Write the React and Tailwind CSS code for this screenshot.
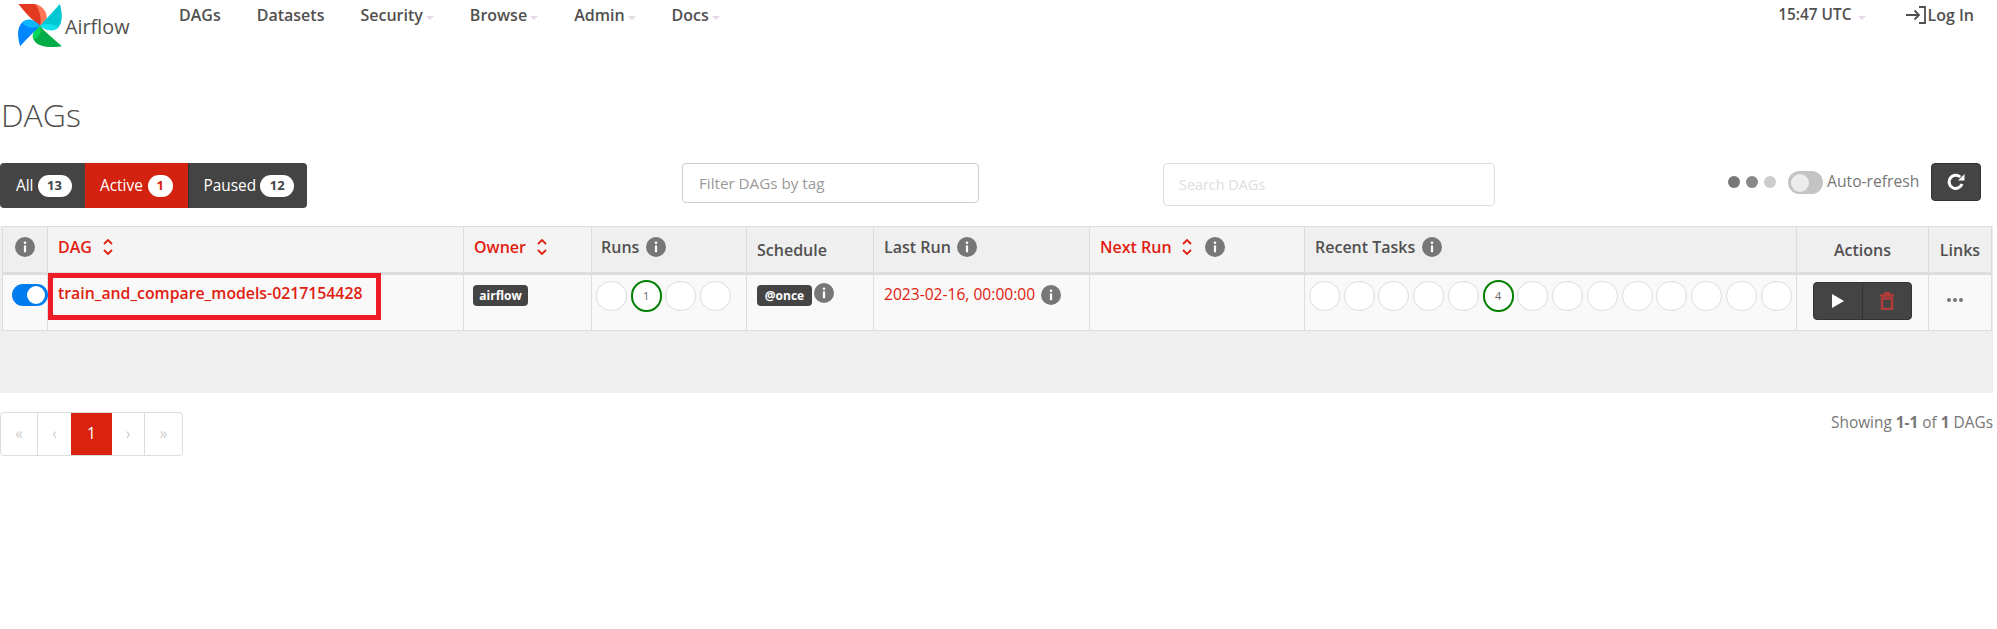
import React from 'react';

const InfoIcon = ({ className = '' }) => (
    <svg viewBox="0 0 20 20" className={`w-5 h-5 shrink-0 ${className}`}>
        <circle cx="10" cy="10" r="10" fill="#777777" />
        <circle cx="10" cy="5.8" r="1.3" fill="#ffffff" />
        <rect x="8.9" y="8.4" width="2.2" height="6.8" fill="#ffffff" />
    </svg>
);

const SortIcon = ({ className = '' }) => (
    <svg viewBox="0 0 10 16" className={`w-[10px] h-4 shrink-0 ${className}`} fill="none" stroke="#e0200f" strokeWidth="1.8">
        <path d="M1 5 L5 1 L9 5" />
        <path d="M1 11 L5 15 L9 11" />
    </svg>
);

const Caret = () => (
    <span className="inline-block ml-[3px] mb-[1px] w-0 h-0 border-x-[4px] border-x-transparent border-t-[4px] border-t-[#e6d8e6]" />
);

const Logo = () => (
    <svg viewBox="24 12 132 130" className="w-[44px] h-[43px] shrink-0">
        <path d="M25 12 C60 9 80 10 94 22 C106 36 112 58 90 78 C74 66 48 44 25 12Z" fill="#e43921" />
        <path d="M76 12 C94 16 114 36 110 58 C107 66 98 72 90 78 C96 60 90 34 76 12Z" fill="#ff7557" />
        <path d="M150 12 C158 40 160 70 142 86 C126 96 106 92 90 78 C106 60 128 36 150 12Z" fill="#00c7d4" />
        <path d="M90 78 C108 68 130 72 146 82 C132 96 106 94 90 78Z" fill="#11e1ee" />
        <path d="M156 140 C124 144 92 144 76 128 C64 112 70 92 90 78 C106 98 132 118 156 140Z" fill="#00ad46" />
        <path d="M90 78 C70 90 64 106 70 120 C88 114 96 96 90 78Z" fill="#04d659" />
        <path d="M30 140 C22 112 20 86 34 70 C50 54 72 60 90 78 C72 96 50 118 30 140Z" fill="#0086ff" />
        <path d="M90 78 C76 86 50 88 36 68 C52 50 76 60 90 78Z" fill="#0cb6ff" />
    </svg>
);

const Circle = ({ value }) =>
    value ? (
        <div className="w-[31px] h-8 rounded-full border-2 border-[#008000] bg-white flex items-center justify-center text-[11px] text-[#666666] shrink-0">
            {value}
        </div>
    ) : (
        <div className="w-[31px] h-[30px] rounded-full border border-[#dddddd] bg-white shrink-0" />
    );

const Tag = ({ children }) => (
    <span className="flex items-center justify-center w-[55px] h-[21px] rounded bg-[#444444] text-white text-[12px] font-bold shrink-0">
        {children}
    </span>
);

const navItems = [
    { label: 'DAGs' },
    { label: 'Datasets' },
    { label: 'Security', caret: true },
    { label: 'Browse', caret: true },
    { label: 'Admin', caret: true },
    { label: 'Docs', caret: true },
];

const thBase = 'border border-[#dddddd] border-b-[3px] p-0 font-semibold align-top';

export default function App() {
    const runs = [null, 1, null, null];
    const tasks = [null, null, null, null, null, 4, null, null, null, null, null, null, null, null];

    return (
        <div className="w-full min-h-[629px] bg-white text-[#51504f] font-['Open_Sans',sans-serif]">
            {/* Top nav */}
            <nav className="flex items-start justify-between h-[93px]">
                <div className="flex items-start">
                    <div className="flex items-center ml-[18px] mt-1 w-[111px]">
                        <Logo />
                        <span className="ml-[3px] mt-[2px] text-[19.8px] text-[#51504f]">Airflow</span>
                    </div>
                    <div className="flex gap-9 ml-[50px] text-[16px] font-semibold leading-[30px]">
                        {navItems.map((item) => (
                            <span key={item.label}>
                                {item.label}
                                {item.caret && <Caret />}
                            </span>
                        ))}
                    </div>
                </div>
                <div className="flex items-start mr-[23px] text-[16px] font-semibold leading-[30px]">
                    <span className="text-[15.4px]">15:47 UTC</span>
                    <span className="ml-[4px]"><Caret /></span>
                    <svg viewBox="0 0 20 18" className="w-5 h-[18px] ml-10 mt-[6px]" fill="none" stroke="#51504f" strokeWidth="1.8">
                        <path d="M0 9 H13 M8.5 4.5 L13 9 L8.5 13.5" />
                        <path d="M13 1 H19 V17 H13" />
                    </svg>
                    <span className="ml-[1px]">Log In</span>
                </div>
            </nav>

            <h2 className="text-[32px] font-light leading-[44px] h-[70px] ml-[1px] text-[#51504f]">DAGs</h2>

            {/* Filters */}
            <div className="flex items-start h-[63px]">
                <div className="flex h-[45px] w-[307px] rounded overflow-hidden bg-[#444444] text-white text-[15.4px]">
                    <div className="w-[85px] flex items-center pl-4">
                        All
                        <span className="ml-[4px] w-[34px] h-[22px] rounded-[11px] bg-white text-[#444444] text-[13px] font-bold flex items-center justify-center">13</span>
                    </div>
                    <div className="w-[102.5px] flex items-center pl-[15px] bg-[#d3220f]">
                        Active
                        <span className="ml-[5px] w-[25px] h-[22px] rounded-[11px] bg-white text-[#d3220f] text-[13px] font-bold flex items-center justify-center">1</span>
                    </div>
                    <div className="flex-1 flex items-center pl-[15px] border-l border-[#333333]">
                        Paused
                        <span className="ml-[4px] w-[34px] h-[22px] rounded-[11px] bg-white text-[#444444] text-[13px] font-bold flex items-center justify-center">12</span>
                    </div>
                </div>
                <div className="ml-[375px] w-[297px] h-10 rounded border border-[#cccccc] flex items-center pl-4 text-[15.2px] text-[#999999]">
                    Filter DAGs by tag
                </div>
                <div className="ml-[184px] w-[332px] h-[43px] rounded border border-[#dddddd] flex items-center pl-[15px] text-[14.4px] text-[#dddddd]">
                    Search DAGs
                </div>
                <div className="ml-[233px] flex items-start">
                    <div className="flex gap-[6px] mt-[13px]">
                        <span className="w-3 h-3 rounded-full bg-[#777777]" />
                        <span className="w-3 h-3 rounded-full bg-[#888888]" />
                        <span className="w-3 h-3 rounded-full bg-[#cccccc]" />
                    </div>
                    <div className="ml-3 mt-2 w-[35px] h-[23px] rounded-full bg-[#c4c4c4] flex items-center pl-[3px]">
                        <span className="w-[18px] h-[18px] rounded-full bg-[#ececec]" />
                    </div>
                    <span className="ml-[4px] mt-[6px] text-[15.7px] leading-6 text-[#777777]">Auto-refresh</span>
                    <div className="ml-3 w-[50px] h-[38px] rounded bg-[#444444] border border-[#333333] flex items-center justify-center">
                        <svg viewBox="0 0 18 18" className="w-[18px] h-[18px]" fill="none">
                            <path d="M15 11 A6.6 6.6 0 1 1 13.2 4" stroke="#ffffff" strokeWidth="3" />
                            <path d="M17.5 1 V7.5 H11Z" fill="#ffffff" />
                        </svg>
                    </div>
                </div>
            </div>

            {/* Table panel */}
            <div className="w-[1993px] bg-[#efefef] h-[167px] pl-[2px]">
                <table className="table-fixed border-collapse w-[1989px] text-[16px]">
                    <colgroup>
                        <col className="w-[45px]" />
                        <col className="w-[416px]" />
                        <col className="w-[128px]" />
                        <col className="w-[155px]" />
                        <col className="w-[127px]" />
                        <col className="w-[216px]" />
                        <col className="w-[215px]" />
                        <col className="w-[492px]" />
                        <col className="w-[132px]" />
                        <col className="w-[63px]" />
                    </colgroup>
                    <thead>
                        <tr className="h-[47px]">
                            <th className={`${thBase} bg-[#efefef]`}>
                                <div className="flex justify-center pt-[10px]"><InfoIcon /></div>
                            </th>
                            <th className={`${thBase} bg-[#f4f4f4] text-[#e0200f]`}>
                                <div className="flex items-center pl-[10px] pt-[10px] h-[30px] gap-[11px]">DAG <SortIcon /></div>
                            </th>
                            <th className={`${thBase} bg-[#f4f4f4] text-[#e0200f]`}>
                                <div className="flex items-center pl-[10px] pt-[10px] h-[30px] gap-[11px]">Owner <SortIcon /></div>
                            </th>
                            <th className={`${thBase} bg-[#efefef]`}>
                                <div className="flex items-center pl-[9px] pt-[10px] h-[30px] gap-[7px]">Runs <InfoIcon /></div>
                            </th>
                            <th className={`${thBase} bg-[#efefef]`}>
                                <div className="pl-[10px] pt-[13px] leading-5 text-left">Schedule</div>
                            </th>
                            <th className={`${thBase} bg-[#efefef]`}>
                                <div className="flex items-center pl-[10px] pt-[10px] h-[30px] gap-[6px]">Last Run <InfoIcon /></div>
                            </th>
                            <th className={`${thBase} bg-[#f4f4f4] text-[#e0200f]`}>
                                <div className="flex items-center pl-[10px] pt-[10px] h-[30px]">
                                    Next Run <SortIcon className="ml-[10px]" /> <InfoIcon className="ml-[13px]" />
                                </div>
                            </th>
                            <th className={`${thBase} bg-[#efefef]`}>
                                <div className="flex items-center pl-[10px] pt-[10px] h-[30px] gap-[7px]">Recent Tasks <InfoIcon /></div>
                            </th>
                            <th className={`${thBase} bg-[#efefef] text-center`}>
                                <div className="pt-[13px] leading-5">Actions</div>
                            </th>
                            <th className={`${thBase} bg-[#efefef] text-center`}>
                                <div className="pt-[13px] leading-5">Links</div>
                            </th>
                        </tr>
                    </thead>
                    <tbody>
                        <tr className="h-[57px] bg-[#f9f9f9] align-top">
                            <td className="border border-[#dddddd] p-0">
                                <div className="ml-[9px] mt-[9px] w-[36px] h-[22px] rounded-full bg-[#017cee] flex items-center justify-end pr-[3px] relative">
                                    <span className="w-[18px] h-[18px] rounded-full bg-white" />
                                </div>
                            </td>
                            <td className="border border-[#dddddd] p-0 relative">
                                <div className="pl-[10px] pt-[7px] text-[15.8px] font-semibold leading-[22px] text-[#e0200f]">
                                    train_and_compare_models-0217154428
                                </div>
                                {/* annotation box drawn over the cell */}
                                <div className="absolute left-0 top-[-2px] w-[333px] h-[47px] border-[5px] border-[#ed1c24]" />
                            </td>
                            <td className="border border-[#dddddd] p-0">
                                <div className="flex pl-[9px] pt-[10px]"><Tag>airflow</Tag></div>
                            </td>
                            <td className="border border-[#dddddd] p-0">
                                <div className="flex gap-[3.74px] pl-[4px] pt-[5px] items-center h-[37px]">
                                    {runs.map((r, i) => <Circle key={i} value={r} />)}
                                </div>
                            </td>
                            <td className="border border-[#dddddd] p-0">
                                <div className="flex items-start pl-[10px] pt-[8px] gap-[2px]">
                                    <span className="mt-[2px]"><Tag>@once</Tag></span>
                                    <InfoIcon />
                                </div>
                            </td>
                            <td className="border border-[#dddddd] p-0">
                                <div className="flex items-center pl-[10px] pt-[8px] gap-[6px] text-[15.6px] text-[#e0200f]">
                                    2023-02-16, 00:00:00 <InfoIcon />
                                </div>
                            </td>
                            <td className="border border-[#dddddd] p-0" />
                            <td className="border border-[#dddddd] p-0">
                                <div className="flex gap-[3.74px] pl-[4px] pt-[5px] items-center h-[37px]">
                                    {tasks.map((t, i) => <Circle key={i} value={t} />)}
                                </div>
                            </td>
                            <td className="border border-[#dddddd] p-0">
                                <div className="ml-4 mt-[7px] w-[99px] h-[38px] rounded bg-[#444444] border border-[#333333] flex">
                                    <div className="w-[49px] flex items-center justify-center border-r border-[#333333]">
                                        <svg viewBox="0 0 12 14" className="w-3 h-[14px]"><path d="M0 0 L12 7 L0 14Z" fill="#ffffff" /></svg>
                                    </div>
                                    <div className="flex-1 flex items-center justify-center">
                                        <svg viewBox="0 0 14 18" className="w-[14px] h-[18px]" fill="none" stroke="#b23c3a" strokeWidth="2.4">
                                            <path d="M0 3.5 H14" />
                                            <path d="M5 3 V1 H9 V3" />
                                            <path d="M2 6.5 H12 V17 H2Z" />
                                        </svg>
                                    </div>
                                </div>
                            </td>
                            <td className="border border-[#dddddd] p-0">
                                <div className="flex gap-[2px] pl-[18px] pt-[23px]">
                                    <span className="w-[4px] h-[4px] rounded-full bg-[#777777]" />
                                    <span className="w-[4px] h-[4px] rounded-full bg-[#777777]" />
                                    <span className="w-[4px] h-[4px] rounded-full bg-[#777777]" />
                                </div>
                            </td>
                        </tr>
                    </tbody>
                </table>
            </div>

            {/* Pagination */}
            <div className="flex items-start justify-between mt-[19px] pr-1">
                <div className="flex h-[44px] rounded border border-[#dddddd] text-[#cccccc] text-[15.4px] overflow-hidden">
                    <span className="w-[37px] flex items-center justify-center border-r border-[#dddddd]">«</span>
                    <span className="w-[33px] flex items-center justify-center">‹</span>
                    <span className="w-[41px] flex items-center justify-center bg-[#d9230f] text-white">1</span>
                    <span className="w-[33px] flex items-center justify-center border-r border-[#dddddd]">›</span>
                    <span className="flex-1 w-[37px] flex items-center justify-center">»</span>
                </div>
                <div className="text-[15.4px] leading-[22px] text-[#777777]">
                    Showing <strong className="font-bold">1-1</strong> of <strong className="font-bold">1</strong> DAGs
                </div>
            </div>
        </div>
    );
}
